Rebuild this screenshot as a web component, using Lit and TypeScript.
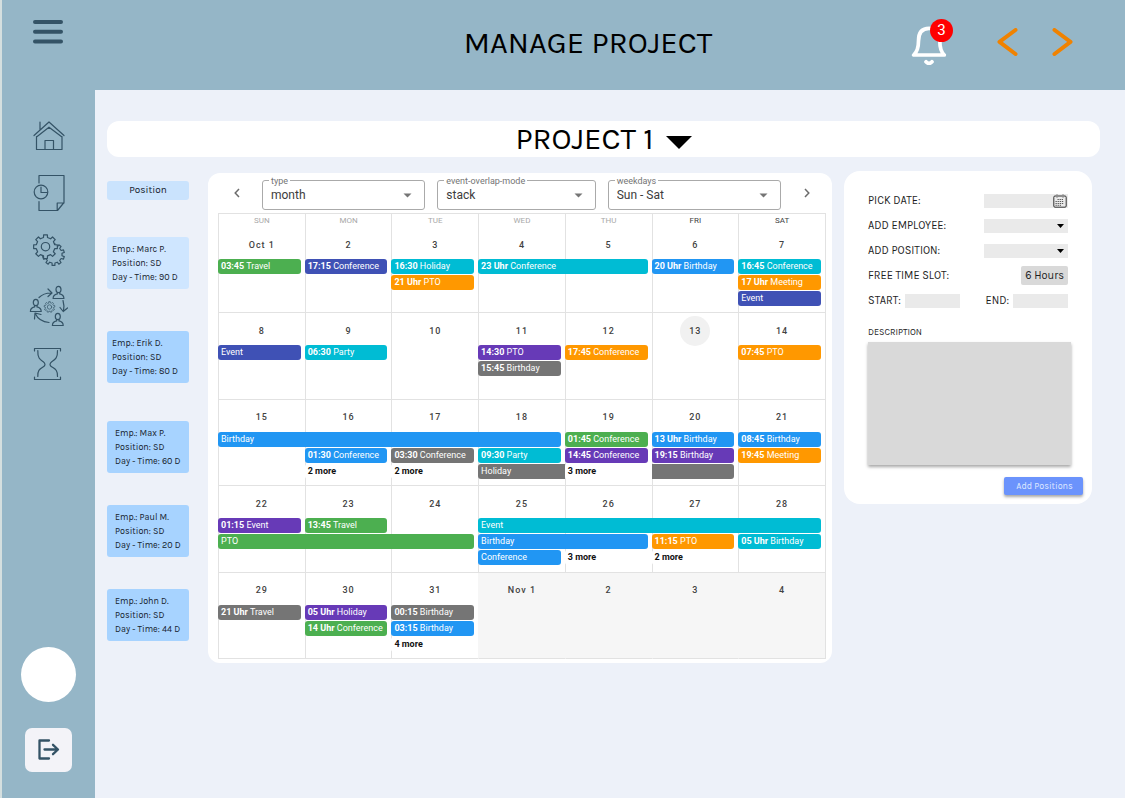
import { LitElement, html, svg, css, nothing } from "lit";
import { customElement, property } from "lit/decorators.js";
import { classMap } from "lit/directives/class-map.js";

interface CalEvent {
  lane: number;
  title: string;
  time?: string;
  color?: string;
  span?: number;
  more?: boolean;
  openEnd?: boolean;
  openStart?: boolean;
}

interface Day {
  label: string;
  today?: boolean;
  outside?: boolean;
  events?: CalEvent[];
}

const ev = (lane: number, color: string, time: string, title: string, span = 1): CalEvent => ({
  lane,
  color,
  time,
  title,
  span,
});
const more = (lane: number, n: number): CalEvent => ({ lane, title: `${n} more`, more: true });

const WEEKDAYS = ["SUN", "MON", "TUE", "WED", "THU", "FRI", "SAT"];

const WEEKS: Day[][] = [
  [
    { label: "Oct 1", events: [ev(1, "green", "03:45", "Travel")] },
    { label: "2", events: [ev(1, "indigo", "17:15", "Conference")] },
    { label: "3", events: [ev(1, "cyan", "16:30", "Holiday"), ev(2, "orange", "21 Uhr", "PTO")] },
    { label: "4", events: [ev(1, "cyan", "23 Uhr", "Conference", 2)] },
    { label: "5" },
    { label: "6", events: [ev(1, "blue", "20 Uhr", "Birthday")] },
    {
      label: "7",
      events: [
        ev(1, "cyan", "16:45", "Conference"),
        ev(2, "orange", "17 Uhr", "Meeting"),
        ev(3, "indigo", "", "Event"),
      ],
    },
  ],
  [
    { label: "8", events: [ev(1, "indigo", "", "Event")] },
    { label: "9", events: [ev(1, "cyan", "06:30", "Party")] },
    { label: "10" },
    { label: "11", events: [ev(1, "purple", "14:30", "PTO"), ev(2, "gray", "15:45", "Birthday")] },
    { label: "12", events: [ev(1, "orange", "17:45", "Conference")] },
    { label: "13", today: true },
    { label: "14", events: [ev(1, "orange", "07:45", "PTO")] },
  ],
  [
    { label: "15", events: [ev(1, "blue", "", "Birthday", 4)] },
    { label: "16", events: [ev(2, "blue", "01:30", "Conference"), more(3, 2)] },
    { label: "17", events: [ev(2, "gray", "03:30", "Conference"), more(3, 2)] },
    {
      label: "18",
      events: [ev(2, "cyan", "09:30", "Party"), { ...ev(3, "gray", "", "Holiday"), openEnd: true }],
    },
    {
      label: "19",
      events: [ev(1, "green", "01:45", "Conference"), ev(2, "purple", "14:45", "Conference"), more(3, 3)],
    },
    {
      label: "20",
      events: [
        ev(1, "blue", "13 Uhr", "Birthday"),
        ev(2, "purple", "19:15", "Birthday"),
        { ...ev(3, "gray", "", ""), openStart: true },
      ],
    },
    { label: "21", events: [ev(1, "blue", "08:45", "Birthday"), ev(2, "orange", "19:45", "Meeting")] },
  ],
  [
    { label: "22", events: [ev(1, "purple", "01:15", "Event"), ev(2, "green", "", "PTO", 3)] },
    { label: "23", events: [ev(1, "green", "13:45", "Travel")] },
    { label: "24" },
    {
      label: "25",
      events: [
        ev(1, "cyan", "", "Event", 4),
        ev(2, "blue", "", "Birthday", 2),
        ev(3, "blue", "", "Conference"),
      ],
    },
    { label: "26", events: [more(3, 3)] },
    { label: "27", events: [ev(2, "orange", "11:15", "PTO"), more(3, 2)] },
    { label: "28", events: [ev(2, "cyan", "05 Uhr", "Birthday")] },
  ],
  [
    { label: "29", events: [ev(1, "gray", "21 Uhr", "Travel")] },
    { label: "30", events: [ev(1, "purple", "05 Uhr", "Holiday"), ev(2, "green", "14 Uhr", "Conference")] },
    {
      label: "31",
      events: [ev(1, "gray", "00:15", "Birthday"), ev(2, "blue", "03:15", "Birthday"), more(3, 4)],
    },
    { label: "Nov 1", outside: true },
    { label: "2", outside: true },
    { label: "3", outside: true },
    { label: "4", outside: true },
  ],
];

const EMPLOYEES = [
  { name: "Marc P.", position: "SD", days: 90, tone: "first" },
  { name: "Erik D.", position: "SD", days: 80, tone: "second" },
  { name: "Max P.", position: "SD", days: 60, tone: "third" },
  { name: "Paul M.", position: "SD", days: 20, tone: "rest" },
  { name: "John D.", position: "SD", days: 44, tone: "rest" },
];

/** Outline of a cog wheel with the given number of teeth. */
function cog(cx: number, cy: number, outer: number, inner: number, teeth: number): string {
  const step = (Math.PI * 2) / teeth;
  const pts: string[] = [];
  for (let i = 0; i < teeth; i++) {
    const a = i * step - Math.PI / 2;
    const corners: [number, number][] = [
      [inner, -0.27],
      [outer, -0.2],
      [outer, 0.2],
      [inner, 0.27],
    ];
    for (const [r, k] of corners) {
      const t = a + k * step;
      pts.push(`${(cx + r * Math.cos(t)).toFixed(2)} ${(cy + r * Math.sin(t)).toFixed(2)}`);
    }
  }
  return `M${pts.join("L")}Z`;
}

const person = (x: number, y: number) => svg`
  <ellipse cx=${x} cy=${y + 4} rx="2.5" ry="3.2"></ellipse>
  <path d="M${x - 1.2} ${y + 7}v1.4C${x - 4} ${y + 9} ${x - 5.4} ${y + 10.5} ${x - 5.4} ${y + 13}h10.8C${x + 5.4} ${y + 10.5} ${x + 4} ${y + 9} ${x + 1.2} ${y + 8.4}v-1.4"></path>`;

const ICONS = {
  home: html`<svg width="32" height="32" viewBox="0 0 32 32">
    <path d="M1 15.5 16 2l15 13.5M7 2v8M3.500 16.500V29.500h25.500V16.500M3.500 17 16 7.200 29 17M12 29.500V20.500h8.500v9"></path>
  </svg>`,
  report: html`<svg width="32" height="38" viewBox="0 0 32 38">
    <path d="M6 9V1.500h25V28.500L24.500 36.500H6V27.500M31 29h-6.800v7.300"></path>
    <circle cx="8" cy="18" r="6.800"></circle>
    <path d="M8 13v5.500h6"></path>
  </svg>`,
  settings: html`<svg width="32" height="32" viewBox="0 0 32 32">
    <path d=${cog(20.5, 20.5, 11, 8.6, 10)}></path>
    <path class="cover" d=${cog(12.5, 12.7, 12, 9.4, 8)}></path>
    <circle cx="12.500" cy="12.700" r="4.200"></circle>
  </svg>`,
  team: html`<svg width="40" height="46" viewBox="0 0 40 46">
    ${person(29.5, 0.5)}${person(6.8, 13.5)}${person(28.8, 27.5)}
    <path d="M10 12.500C13 9.500 17 8 22 8M19 4l4 4-4 3.500M34 15.500q1.500 5 .5 10.500M31 22.500l3.200 4 4.300-3.500M20 37.500Q10 36.500 6.500 29M5.500 34l.5-6 6 1.500"></path>
    <g class="faint"><path d=${cog(20.5, 22, 5.4, 4.3, 9)}></path><circle cx="20.500" cy="22" r="2.200"></circle></g>
  </svg>`,
  wait: html`<svg width="32" height="34" viewBox="0 0 32 34">
    <path d="M1.500 4V1.500h26V4M1.500 30v2.500h26V30M4.800 3.500C4.500 11 7 12.500 10 14.500q4 3 0 5.500C7 22 4.500 23 4.800 29.500M24.500 3.500C24.800 11 22 12.500 19 14.500q-4 3 0 5.500C22 22 24.800 23 24.500 29.500"></path>
  </svg>`,
};

@customElement("side-bar")
class SideBar extends LitElement {
  static styles = css`
    :host {
      display: flex;
      flex-direction: column;
      align-items: center;
      box-sizing: border-box;
      padding: 19px 0 26px;
      border-left: 2px solid #d5dfdf;
      background: #95b6c7;
    }
    button {
      border: 0;
      padding: 0;
      background: none;
      cursor: pointer;
    }
    svg {
      display: block;
      fill: none;
      stroke: #345366;
      stroke-width: 1.2;
      stroke-linejoin: round;
      stroke-linecap: round;
    }
    .cover {
      fill: #95b6c7;
    }
    .faint {
      stroke-width: 0.7;
    }
    .menu svg {
      stroke-width: 4;
    }
    nav {
      display: flex;
      flex-direction: column;
      gap: 13px;
      margin-top: 69px;
    }
    nav a {
      display: grid;
      place-items: center;
      height: 44px;
    }
    .foot {
      display: flex;
      flex-direction: column;
      align-items: center;
      gap: 26px;
      margin-top: auto;
    }
    .avatar {
      width: 55px;
      height: 55px;
      border-radius: 50%;
      background: #fff;
    }
    .logout {
      display: grid;
      place-items: center;
      width: 47px;
      height: 44px;
      border-radius: 7px;
      background: #f3f3f8;
    }
    .logout svg {
      stroke-width: 2.3;
    }
  `;

  render() {
    const links: [string, unknown][] = [
      ["Home", ICONS.home],
      ["Reports", ICONS.report],
      ["Settings", ICONS.settings],
      ["Team", ICONS.team],
      ["Waiting", ICONS.wait],
    ];
    return html`
      <button class="menu" aria-label="Menu">
        <svg width="31" height="26" viewBox="0 0 31 26"><path d="M2 3h26M2 12.700h26M2 22.500h26"></path></svg>
      </button>
      <nav>${links.map(([name, icon]) => html`<a href="#" aria-label=${name}>${icon}</a>`)}</nav>
      <div class="foot">
        <button class="avatar" aria-label="Profile"></button>
        <button class="logout" aria-label="Log out">
          <svg width="22" height="22" viewBox="0 0 22 22"><path d="M11 1.500H1.500v18H11M6.500 10.500h13M15 5.800l5 4.700-5 4.700"></path></svg>
        </button>
      </div>
    `;
  }
}

@customElement("top-bar")
class TopBar extends LitElement {
  static styles = css`
    :host {
      display: grid;
      grid-template-columns: 1fr auto 1fr;
      align-items: center;
      box-sizing: border-box;
      height: 90px;
      padding: 0 52px 4px 8px;
      background: #95b6c7;
    }
    h1 {
      grid-column: 2;
      margin: 0;
      font-size: 31px;
      font-weight: 400;
      line-height: 36px;
    }
    .actions {
      display: flex;
      align-items: center;
      justify-content: flex-end;
    }
    button {
      position: relative;
      border: 0;
      padding: 0;
      background: none;
      cursor: pointer;
    }
    svg {
      display: block;
      fill: none;
      stroke-linecap: round;
      stroke-linejoin: round;
    }
    .bell {
      margin-right: 50px;
      stroke: #fff;
      stroke-width: 3.7;
    }
    .step {
      stroke: #f08200;
      stroke-width: 4;
    }
    .next {
      margin-left: 34px;
    }
    .badge {
      position: absolute;
      top: -2px;
      right: -6px;
      width: 23px;
      border-radius: 50%;
      background: #f00;
      color: #fff;
      font: 15px/23px Roboto, sans-serif;
      text-align: center;
    }
  `;

  render() {
    return html`
      <h1>MANAGE PROJECT</h1>
      <div class="actions">
        <button class="bell" aria-label="Notifications">
          <svg width="36" height="44" viewBox="0 0 36 44">
            <path d="M2.700 34H33.300C30 31 28.800 26.500 28.800 20C29 11 25 7.300 18 7.300S7.500 11 7.500 20C7.500 26.500 6 31 2.700 34ZM15 40.800q3 3.200 6 0"></path>
          </svg>
          <span class="badge">3</span>
        </button>
        <button class="step" aria-label="Previous">
          <svg width="21" height="30" viewBox="0 0 21 30"><path d="M18.500 2 2.500 13.800 18.500 26"></path></svg>
        </button>
        <button class="step next" aria-label="Next">
          <svg width="21" height="30" viewBox="0 0 21 30"><path d="M2.500 2 18.500 13.800 2.500 26"></path></svg>
        </button>
      </div>
    `;
  }
}

@customElement("employee-list")
class EmployeeList extends LitElement {
  static styles = css`
    :host {
      display: block;
      padding-top: 10px;
      color: #16222d;
    }
    h2 {
      margin: 0;
      border-radius: 3px;
      background: #cae3fd;
      font-size: 10px;
      font-weight: 400;
      line-height: 19px;
      text-align: center;
    }
    ul {
      margin: 0;
      padding: 0;
      list-style: none;
    }
    li {
      box-sizing: border-box;
      margin-top: 32px;
      padding: 5px 0 5px 8px;
      border-radius: 3px;
      background: #a7d3ff;
      font-size: 9px;
      line-height: 14px;
      white-space: nowrap;
    }
    li.first {
      margin-top: 37px;
      padding-left: 5px;
      background: #cfe6ff;
    }
    li.second {
      margin-top: 42px;
      padding-left: 5px;
    }
    li.third {
      margin-top: 38px;
    }
    p {
      margin: 0;
    }
  `;

  render() {
    return html`
      <h2>Position</h2>
      <ul>
        ${EMPLOYEES.map(
          (e) => html`<li class=${e.tone}>
            <p>Emp.: ${e.name}</p>
            <p>Position: ${e.position}</p>
            <p>Day - Time: ${e.days} D</p>
          </li>`
        )}
      </ul>
    `;
  }
}

@customElement("outlined-select")
class OutlinedSelect extends LitElement {
  @property() label = "";
  @property() value = "";

  static styles = css`
    :host {
      display: block;
      position: relative;
      color: #3c3c3c;
    }
    label {
      position: absolute;
      top: -5px;
      left: 7px;
      padding: 0 2px;
      background: #fff;
      color: #757575;
      font-size: 9px;
      line-height: 12px;
    }
    select {
      display: block;
      appearance: none;
      width: 100%;
      height: 30px;
      padding: 0 24px 0 8px;
      border: 1px solid #aaa;
      border-radius: 3px;
      background: #fff;
      color: inherit;
      font: 12px Roboto, sans-serif;
    }
    svg {
      position: absolute;
      top: 13px;
      right: 13px;
      fill: #757575;
      pointer-events: none;
    }
  `;

  render() {
    return html`
      <select id="field"><option>${this.value}</option></select>
      <label for="field">${this.label}</label>
      <svg width="9" height="5" viewBox="0 0 9 5"><path d="M.5.500h8L4.500 4.500Z"></path></svg>
    `;
  }
}

@customElement("month-calendar")
class MonthCalendar extends LitElement {
  static styles = css`
    :host {
      display: block;
      box-sizing: border-box;
      min-width: 0;
      padding: 7px 6px 4px 10px;
      border-radius: 12px;
      background: #fff;
      color: #424242;
      font-family: Roboto, sans-serif;
    }
    button {
      border: 0;
      padding: 0;
      background: none;
      color: inherit;
      font: inherit;
      text-align: left;
      cursor: pointer;
    }
    .toolbar {
      display: grid;
      grid-template-columns: 32px 163fr 158fr 173fr 33px;
      column-gap: 12px;
      height: 33px;
    }
    .arrow {
      display: grid;
      place-items: center;
      height: 26px;
    }
    .prev {
      padding-left: 6px;
    }
    .next {
      padding-right: 6px;
    }
    .arrow svg {
      fill: none;
      stroke: #6c6c6c;
      stroke-width: 1.5;
    }
    table {
      width: 100%;
      height: 446px;
      border-spacing: 0;
      border: solid #e2e2e2;
      border-width: 1px 1px 0 0;
      table-layout: fixed;
    }
    th,
    td {
      padding: 0;
      border-left: 1px solid #e2e2e2;
    }
    th {
      height: 13px;
      color: #a8a8a8;
      font-size: 8px;
      font-weight: 400;
      line-height: 13px;
    }
    th.dark {
      color: #424242;
    }
    td {
      border-bottom: 1px solid #e2e2e2;
      vertical-align: top;
    }
    td.outside {
      border-left-color: #f6f6f6;
      background: #f6f6f6;
    }
    .day {
      display: grid;
      grid-template-rows: 31px repeat(3, 15px);
      row-gap: 1px;
    }
    .number {
      place-self: center;
      width: 30px;
      height: 30px;
      border-radius: 50%;
      margin-top: 4px;
      font-size: 9px;
      font-weight: 500;
      letter-spacing: 1px;
      text-align: center;
      white-space: nowrap;
    }
    .today .number {
      background: #f1f1f1;
    }
    .event {
      position: relative;
      z-index: 1;
      overflow: hidden;
      margin-left: -1px;
      padding-left: 3px;
      border-radius: 3px;
      color: #fff;
      font-size: 9px;
      line-height: 15px;
      white-space: nowrap;
    }
    .event.open-end {
      border-radius: 3px 0 0 3px;
    }
    .event.open-start {
      border-radius: 0 3px 3px 0;
    }
    .more {
      background: #fff;
      color: #111;
      font-weight: 700;
    }
    .green {
      background: #4caf50;
    }
    .indigo {
      background: #3f51b5;
    }
    .cyan {
      background: #00bcd4;
    }
    .orange {
      background: #ff9800;
    }
    .blue {
      background: #2196f3;
    }
    .purple {
      background: #673ab7;
    }
    .gray {
      background: #757575;
    }
  `;

  private event(e: CalEvent) {
    const classes = {
      event: true,
      more: !!e.more,
      [e.color ?? "plain"]: true,
      "open-end": !!e.openEnd,
      "open-start": !!e.openStart,
    };
    const span = e.span ?? 1;
    const width = `calc(${span * 100}% + ${span - (e.openEnd ? 0 : 4)}px)`;
    return html`<button class=${classMap(classes)} style="grid-row: ${e.lane + 1}; width: ${width}">${e.time
        ? html`<b>${e.time}</b> `
        : nothing}${e.title}</button>`;
  }

  render() {
    return html`
      <div class="toolbar">
        <button class="arrow prev" aria-label="Previous month">
          <svg width="6" height="10" viewBox="0 0 6 10"><path d="M5 1 1.200 5 5 9"></path></svg>
        </button>
        <outlined-select label="type" value="month"></outlined-select>
        <outlined-select label="event-overlap-mode" value="stack"></outlined-select>
        <outlined-select label="weekdays" value="Sun - Sat"></outlined-select>
        <button class="arrow next" aria-label="Next month">
          <svg width="6" height="10" viewBox="0 0 6 10"><path d="M1 1 4.800 5 1 9"></path></svg>
        </button>
      </div>
      <table>
        <thead>
          <tr>${WEEKDAYS.map((d, i) => html`<th class=${i > 4 ? "dark" : ""}>${d}</th>`)}</tr>
        </thead>
        <tbody>
          ${WEEKS.map(
            (week) => html`<tr>
              ${week.map(
                (day) => html`<td class=${classMap({ today: !!day.today, outside: !!day.outside })}>
                  <div class="day">
                    <button class="number">${day.label}</button>
                    ${(day.events ?? []).map((e) => this.event(e))}
                  </div>
                </td>`
              )}
            </tr>`
          )}
        </tbody>
      </table>
    `;
  }
}

@customElement("position-form")
class PositionForm extends LitElement {
  static styles = css`
    :host {
      display: block;
      box-sizing: border-box;
      padding: 20px 9px 9px 24px;
      border-radius: 16px;
      background: #fff;
      color: #1e1e1e;
    }
    form {
      display: flex;
      flex-direction: column;
    }
    .rows {
      display: grid;
      gap: 6px;
      padding-right: 15px;
    }
    .row {
      display: flex;
      align-items: center;
      justify-content: space-between;
      height: 19px;
      font-size: 11px;
    }
    .field {
      position: relative;
      width: 84px;
    }
    input,
    select {
      display: block;
      appearance: none;
      box-sizing: border-box;
      width: 100%;
      height: 14px;
      margin: 0;
      padding: 0 4px;
      border: 0;
      border-radius: 0;
      background: #eaeaea;
      font: 10px Roboto, sans-serif;
    }
    .field svg {
      position: absolute;
      pointer-events: none;
    }
    .caret {
      top: 5px;
      right: 4px;
    }
    .date {
      top: 0;
      right: 1px;
      fill: none;
      stroke: #333;
    }
    .hours {
      padding: 0 4px;
      border-radius: 2px;
      background: #d9d9d9;
      line-height: 19px;
    }
    .time {
      display: flex;
      align-items: center;
      gap: 4px;
    }
    .time input {
      width: 55px;
    }
    .caption {
      margin-top: 16px;
      font-size: 9px;
      line-height: 12px;
    }
    textarea {
      height: 123px;
      margin: 4px 12px 0 0;
      box-sizing: border-box;
      border: 0;
      padding: 6px;
      background: #d9d9d9;
      box-shadow: 0 2px 3px rgba(0, 0, 0, 0.35);
      font: 10px Roboto, sans-serif;
      resize: none;
    }
    .submit {
      align-self: flex-end;
      width: 79px;
      height: 18px;
      margin-top: 12px;
      padding: 0 0 0 2px;
      border: 0;
      border-radius: 2px;
      background: #6b93fc;
      box-shadow: 0 2px 3px rgba(0, 0, 0, 0.35);
      color: #dfe8ff;
      font: inherit;
      font-size: 9px;
      cursor: pointer;
    }
  `;

  private picker(id: string, label: string) {
    return html`<div class="row">
      <label for=${id}>${label}</label>
      <div class="field">
        <select id=${id}><option></option></select>
        <svg class="caret" width="7" height="4" viewBox="0 0 7 4"><path d="M0 0h7L3.500 4Z"></path></svg>
      </div>
    </div>`;
  }

  render() {
    return html`
      <form>
        <div class="rows">
          <div class="row">
            <label for="date">PICK DATE:</label>
            <div class="field">
              <input id="date" type="text" />
              <svg class="date" width="14" height="14" viewBox="0 0 14 14">
                <path d="M3 2H2A1.200 1.200 0 0 0 .8 3.200V12A1.200 1.200 0 0 0 2 13.200h10A1.200 1.200 0 0 0 13.200 12V3.200A1.200 1.200 0 0 0 12 2h-1M5 2h4M4 .5v3M10 .5v3"></path>
                <path stroke-width=".8" stroke-dasharray="1.300 .8" d="M4.500 5.500h6M2.500 7.500h8.500M2.500 9.500h8.500M2.500 11.300h6"></path>
              </svg>
            </div>
          </div>
          ${this.picker("employee", "ADD EMPLOYEE:")} ${this.picker("position", "ADD POSITION:")}
          <div class="row"><span>FREE TIME SLOT:</span><span class="hours">6 Hours</span></div>
          <div class="row">
            <div class="time"><label for="start">START:</label><input id="start" type="text" /></div>
            <div class="time"><label for="end">END:</label><input id="end" type="text" /></div>
          </div>
        </div>
        <label class="caption" for="description">DESCRIPTION</label>
        <textarea id="description"></textarea>
        <button class="submit" type="button">Add Positions</button>
      </form>
    `;
  }
}

@customElement("app-root")
class AppRoot extends LitElement {
  static styles = css`
    :host {
      display: grid;
      grid-template-columns: 95px 1fr;
      grid-template-rows: auto 1fr;
      min-height: 100vh;
      background: #edf1f9;
      color: #000;
      font-family: Karla, Roboto, sans-serif;
    }
    side-bar {
      grid-row: 1 / 3;
    }
    main {
      display: flex;
      flex-direction: column;
      gap: 14px;
      min-width: 0;
      padding: 31px 25px 31px 12px;
    }
    .project {
      display: flex;
      align-items: center;
      justify-content: center;
      gap: 12px;
      height: 36px;
      border: 0;
      border-radius: 12px;
      background: #fff;
      color: #000;
      font: inherit;
      font-size: 31px;
      cursor: pointer;
    }
    .project svg {
      margin-top: 7px;
    }
    .columns {
      display: grid;
      grid-template-columns: 82px 1fr 248px;
      align-items: start;
      padding-right: 8px;
    }
    month-calendar {
      margin: 2px 12px 0 19px;
    }
  `;

  render() {
    return html`
      <side-bar></side-bar>
      <top-bar></top-bar>
      <main>
        <button class="project">
          <span>PROJECT 1</span>
          <svg width="26" height="13" viewBox="0 0 26 13"><path d="M0 0h26L13 13Z"></path></svg>
        </button>
        <div class="columns">
          <employee-list></employee-list>
          <month-calendar></month-calendar>
          <position-form></position-form>
        </div>
      </main>
    `;
  }
}
